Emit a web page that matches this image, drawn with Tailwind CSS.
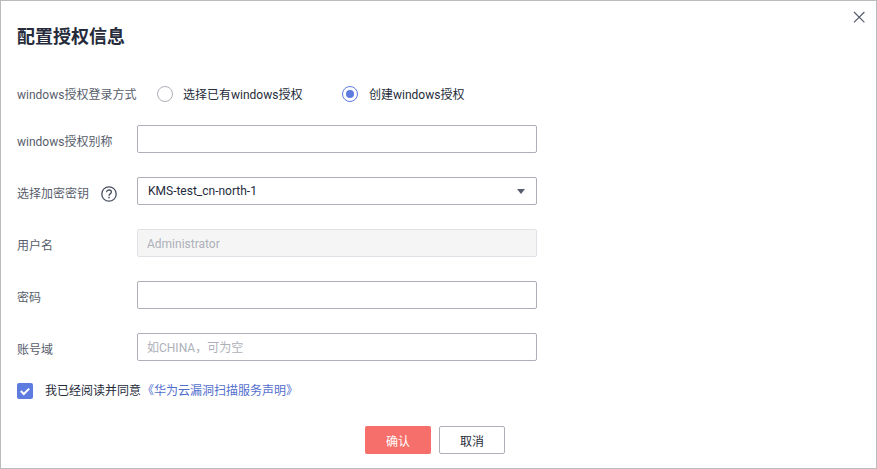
<!DOCTYPE html>
<html lang="zh-CN">

<head>
    <meta charset="UTF-8">
    <title>配置授权信息</title>
    <script src="https://cdn.jsdelivr.net/npm/@tailwindcss/browser@4"></script>
</head>

<body class="bg-white">
    <!-- Dialog -->
    <div class="relative w-[877px] h-[469px] overflow-hidden bg-white border border-[#bbbbbb] pl-4 font-['Roboto','Noto_Sans_CJK_SC',sans-serif] text-xs text-[#252b3a]">
        <button class="absolute right-[11px] top-[10px] w-3 h-3 text-[#575d6c]">
            <svg viewBox="0 0 12 12" class="w-3 h-3" fill="none" stroke="currentColor" stroke-width="1.2">
                <path d="M1 1l10.4 10.4M11.4 1L1 11.4" />
            </svg>
        </button>

        <h2 class="h-[24px] mt-[24px] leading-[24px] text-lg font-bold text-[#252b3a]">配置授权信息</h2>

        <!-- Login type -->
        <div class="flex items-center h-[28px] mt-[31px]">
            <label class="w-[120px] pt-[2px] text-[#575d6c]">windows授权登录方式</label>
            <div class="flex items-center">
                <span class="w-4 h-4 ml-[20px] rounded-full border border-[#adb0b8]"></span>
                <span class="ml-[10px] pt-[2px] w-[159px]">选择已有windows授权</span>
                <span class="flex items-center justify-center w-4 h-4 rounded-full border border-[#5e7ce0]">
                    <span class="w-2 h-2 rounded-full bg-[#5e7ce0]"></span>
                </span>
                <span class="ml-[11px] pt-[2px]">创建windows授权</span>
            </div>
        </div>

        <!-- Alias -->
        <div class="flex h-[28px] mt-[17px]">
            <label class="w-[120px] pt-[10px] leading-[14px] text-[#575d6c]">windows授权别称</label>
            <input class="w-[400px] h-[28px] px-[10px] rounded-[2px] border border-[#adb0b8] bg-white outline-none" type="text">
        </div>

        <!-- Key select -->
        <div class="flex h-[28px] mt-[24px]">
            <label class="flex items-center w-[120px] pt-[6px] text-[#575d6c]">
                <span>选择加密密钥</span>
                <svg viewBox="0 0 16 16" class="w-4 h-4 ml-3" fill="none" stroke="#4a5060" stroke-width="1.3">
                    <circle cx="8" cy="8" r="7.2" />
                    <path d="M5.6 6.2c0-1.3 1-2.2 2.4-2.2s2.4.9 2.4 2.1c0 1.9-2.4 1.7-2.4 3.6" />
                    <path d="M8 10.8v1.5" stroke-width="1.5" />
                </svg>
            </label>
            <div class="flex items-center justify-between w-[400px] h-[28px] pl-[10px] pr-[11px] rounded-[2px] border border-[#adb0b8] bg-white">
                <span>KMS-test_cn-north-1</span>
                <span class="w-0 h-0 border-x-[4.5px] border-x-transparent border-t-[5px] border-t-[#575d6c]"></span>
            </div>
        </div>

        <!-- Username -->
        <div class="flex h-[28px] mt-[24px]">
            <label class="w-[120px] pt-[10px] leading-[14px] text-[#575d6c]">用户名</label>
            <input class="w-[400px] h-[28px] pl-[9px] pr-[10px] pt-[2px] rounded-[2px] border border-[#dfe1e6] bg-[#f5f5f6] text-[#adb0b8] outline-none" type="text" value="Administrator" disabled>
        </div>

        <!-- Password -->
        <div class="flex h-[28px] mt-[24px]">
            <label class="w-[120px] pt-[10px] leading-[14px] text-[#575d6c]">密码</label>
            <input class="w-[400px] h-[28px] px-[10px] rounded-[2px] border border-[#adb0b8] bg-white outline-none" type="password">
        </div>

        <!-- Domain -->
        <div class="flex h-[28px] mt-[24px]">
            <label class="w-[120px] pt-[10px] leading-[14px] text-[#575d6c]">账号域</label>
            <input class="w-[400px] h-[28px] pl-[9px] pr-[10px] pt-[2px] rounded-[2px] border border-[#adb0b8] bg-white outline-none placeholder:text-[#adb0b8]" type="text" placeholder="如CHINA，可为空">
        </div>

        <!-- Agreement -->
        <div class="flex items-center h-4 mt-[22px]">
            <span class="flex items-center justify-center w-4 h-4 rounded-[2px] bg-[#5e7ce0]">
                <svg viewBox="0 0 12 12" class="w-3 h-3" fill="none" stroke="#ffffff" stroke-width="2">
                    <path d="M1.8 6l3 3 5.4-5.4" />
                </svg>
            </span>
            <span class="ml-3">我已经阅读并同意</span>
            <a class="ml-px text-[#526ecc]">《华为云漏洞扫描服务声明》</a>
        </div>

        <!-- Footer buttons -->
        <div class="flex gap-2 mt-[27px] ml-[348px]">
            <button class="w-[66px] h-[28px] pt-[3px] rounded-[2px] bg-[#f66f6a] text-white">确认</button>
            <button class="w-[66px] h-[28px] pt-[3px] rounded-[2px] border border-[#adb0b8] bg-white">取消</button>
        </div>
    </div>
</body>

</html>
